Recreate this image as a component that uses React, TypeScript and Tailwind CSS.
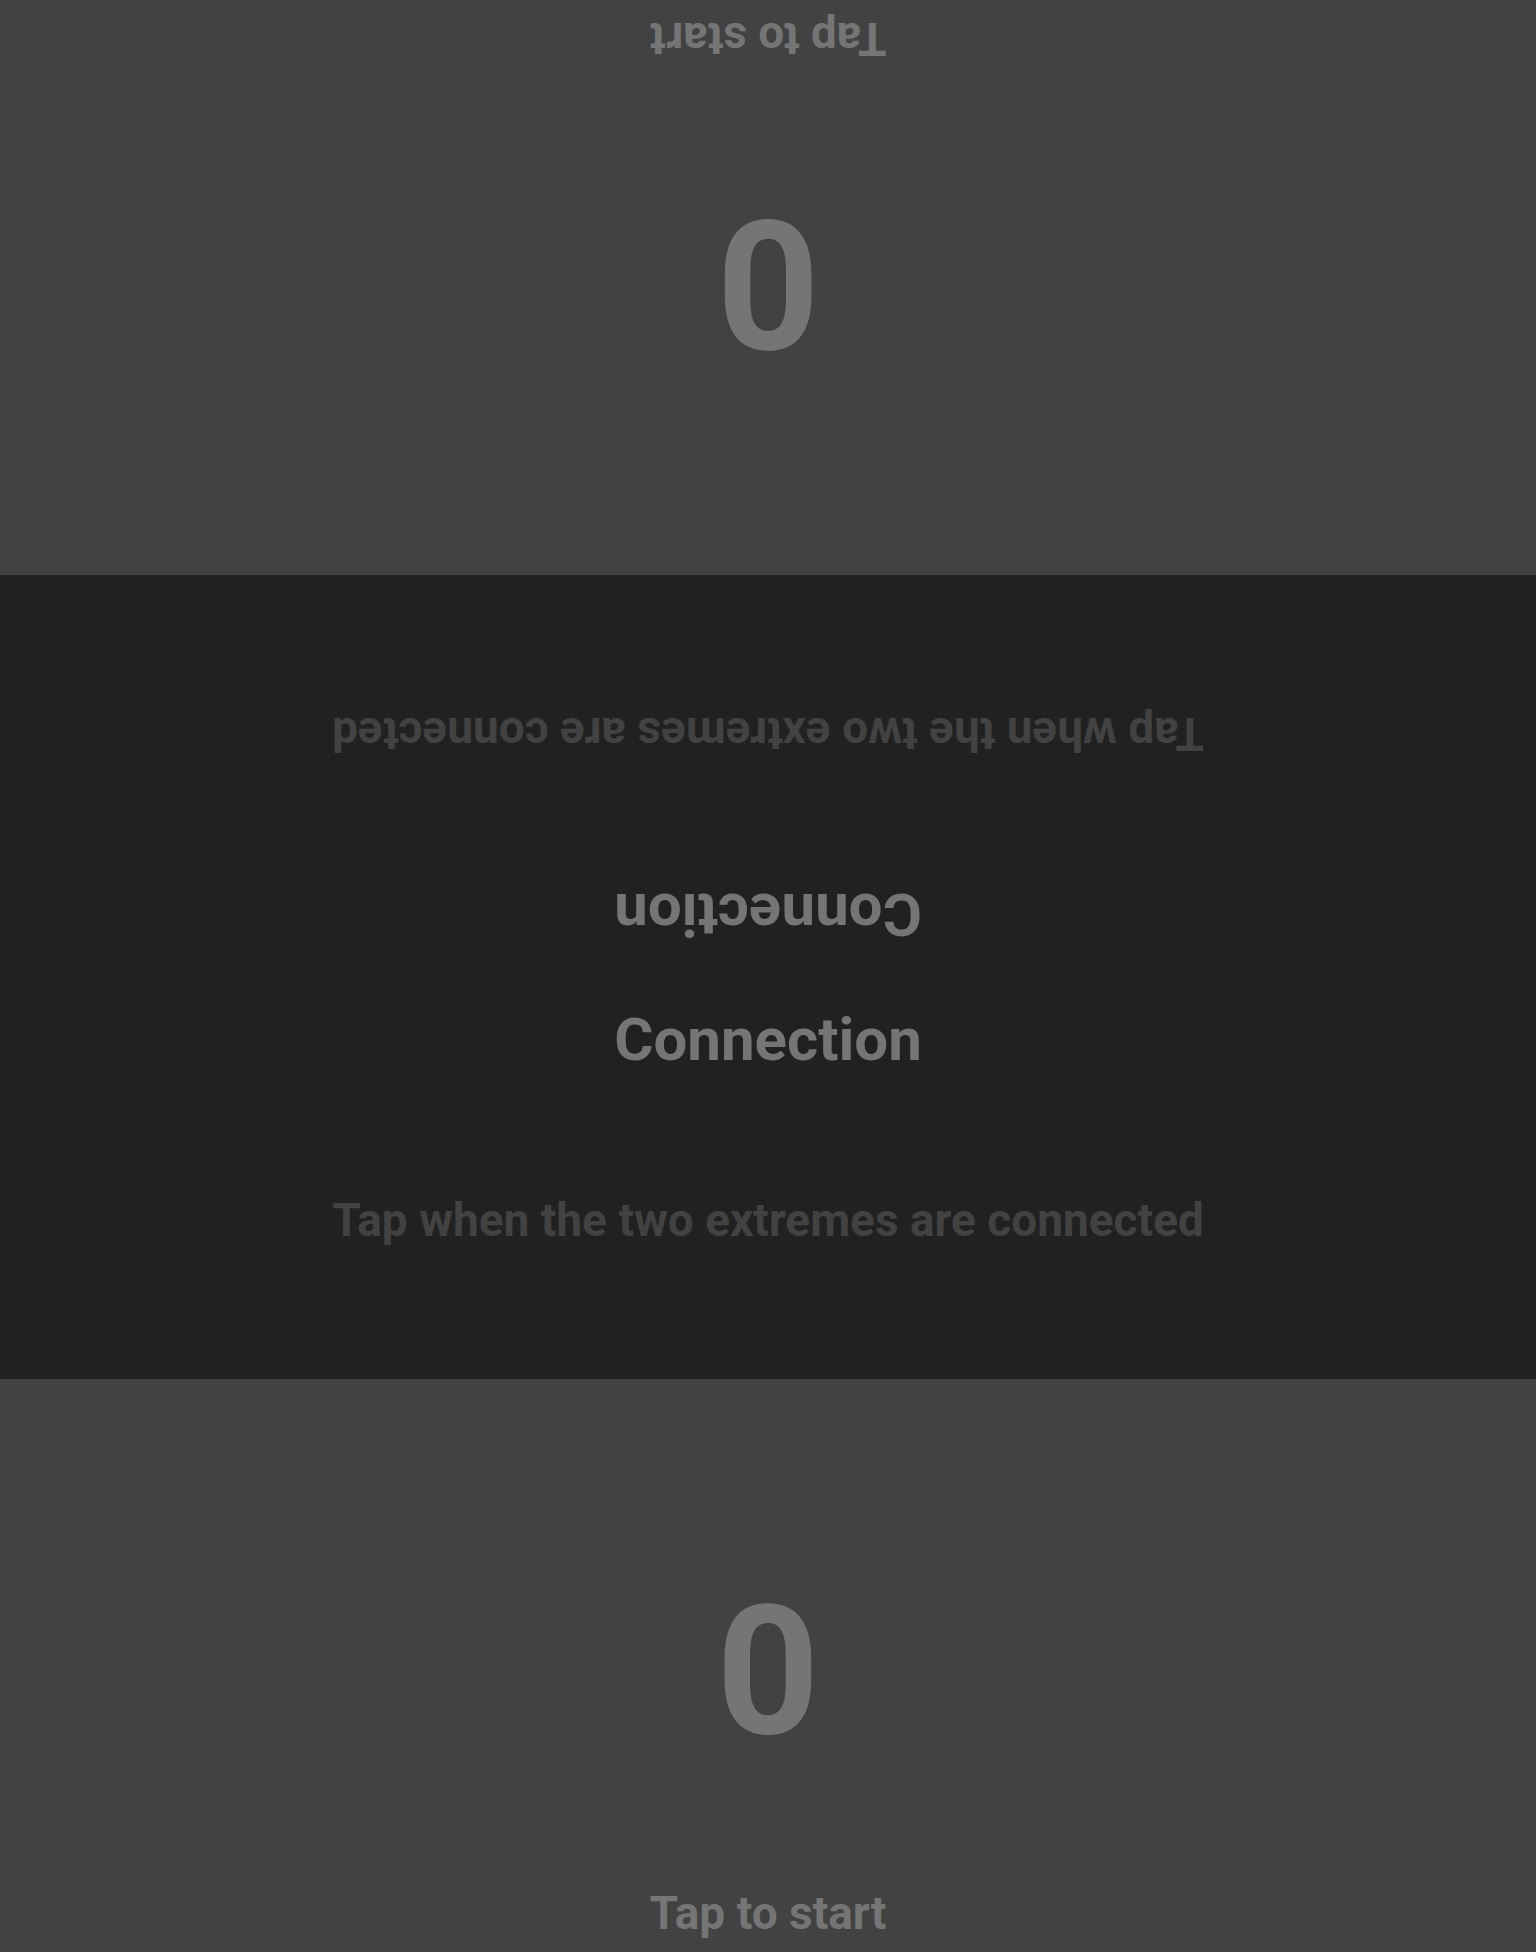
function Player({ flipped }: { flipped?: boolean }) {
  return (
    <div
      className={`flex h-full flex-col items-center bg-[#424242] text-[#757575] ${
        flipped ? "rotate-180" : ""
      }`}
    >
      <div className="pt-[203px] text-[180px] font-bold leading-none">0</div>
      <div className="mt-auto pb-[16px] text-[46px] font-bold leading-none">Tap to start</div>
    </div>
  );
}

function Half({ flipped }: { flipped?: boolean }) {
  return (
    <div className={`flex h-1/2 flex-col items-center ${flipped ? "rotate-180" : ""}`}>
      <div className="pt-[33px] text-[60px] font-bold leading-none text-[#757575]">Connection</div>
      <div className="mt-[127px] text-[46px] font-bold leading-none text-[#424242]">
        Tap when the two extremes are connected
      </div>
    </div>
  );
}

export default function App() {
  return (
    <div className="flex h-[1952px] flex-col select-none font-['Roboto',sans-serif]">
      <div className="h-[575px]">
        <Player flipped />
      </div>
      <div className="h-[804px] bg-[#212121]">
        <Half flipped />
        <Half />
      </div>
      <div className="h-[573px]">
        <Player />
      </div>
    </div>
  );
}
